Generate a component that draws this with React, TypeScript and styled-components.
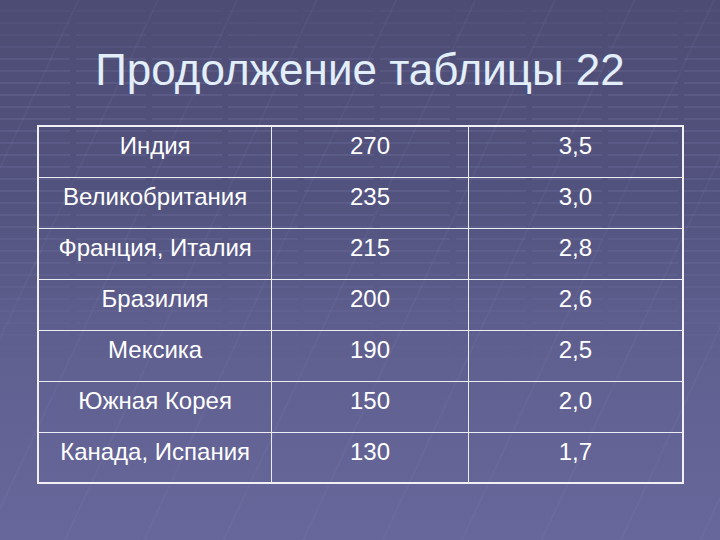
import React from "react";
import styled, { createGlobalStyle } from "styled-components";

const rows: [string, string, string][] = [
  ["Индия", "270", "3,5"],
  ["Великобритания", "235", "3,0"],
  ["Франция, Италия", "215", "2,8"],
  ["Бразилия", "200", "2,6"],
  ["Мексика", "190", "2,5"],
  ["Южная Корея", "150", "2,0"],
  ["Канада, Испания", "130", "1,7"],
];

const GlobalStyle = createGlobalStyle`
  html, body {
    margin: 0;
    padding: 0;
  }
  body {
    font-family: "Liberation Sans", Arial, sans-serif;
  }
`;

const Slide = styled.div`
  position: relative;
  width: 720px;
  height: 540px;
  overflow: hidden;
  display: flex;
  flex-direction: column;
  background: linear-gradient(180deg, #4c4c74 0%, #52527e 35%, #5e5e8e 60%, #67679b 100%);
`;

/* faint dashed horizontal lines across the upper part of the slide */
const Stripes = styled.div`
  position: absolute;
  inset: 0;
  pointer-events: none;
  background:
    repeating-linear-gradient(
      180deg,
      transparent 0px,
      transparent 10px,
      rgba(150, 150, 200, 0.16) 10px,
      rgba(150, 150, 200, 0.16) 12px
    );
  -webkit-mask-image:
    linear-gradient(180deg, rgba(0,0,0,0.2) 0%, rgba(0,0,0,1) 15%, rgba(0,0,0,0.8) 45%, rgba(0,0,0,0) 72%),
    repeating-linear-gradient(90deg, #000 0px, #000 70px, transparent 70px, transparent 76px);
  -webkit-mask-composite: source-in;
  mask-image:
    linear-gradient(180deg, rgba(0,0,0,0.2) 0%, rgba(0,0,0,1) 15%, rgba(0,0,0,0.8) 45%, rgba(0,0,0,0) 72%),
    repeating-linear-gradient(90deg, #000 0px, #000 70px, transparent 70px, transparent 76px);
  mask-composite: intersect;
`;

const Diagonals = styled.div`
  position: absolute;
  inset: 0;
  pointer-events: none;
  background: repeating-linear-gradient(
    115deg,
    transparent 0px,
    transparent 70px,
    rgba(170, 170, 220, 0.05) 70px,
    rgba(170, 170, 220, 0.05) 72px
  );
`;

const Title = styled.h1`
  position: relative;
  margin: 0;
  padding-top: 45px;
  height: 80px;
  text-align: center;
  font-family: "Liberation Sans", Arial, sans-serif;
  font-weight: normal;
  font-size: 44px;
  line-height: normal;
  color: #e2eefa;
`;

const Table = styled.table`
  position: relative;
  margin-left: 37px;
  width: 647px;
  border-collapse: collapse;
  border: 2px solid #f0f0f6;
`;

const Row = styled.tr`
  height: 51px;
`;

const Cell = styled.td<{ $w: number }>`
  width: ${(p) => p.$w}px;
  padding: 0 0 11px;
  border: 1px solid #ececf4;
  text-align: center;
  vertical-align: middle;
  font-size: 24px;
  line-height: 28px;
  color: #ffffff;
  font-family: "Liberation Sans", Arial, sans-serif;
`;

const widths = [233, 198, 216];

export default function App() {
  return (
    <>
      <GlobalStyle />
      <Slide>
        <Stripes />
        <Diagonals />
        <Title>Продолжение таблицы 22</Title>
        <Table>
          <tbody>
            {rows.map((r) => (
              <Row key={r[0]}>
                {r.map((c, i) => (
                  <Cell key={i} $w={widths[i]}>
                    {c}
                  </Cell>
                ))}
              </Row>
            ))}
          </tbody>
        </Table>
      </Slide>
    </>
  );
}
